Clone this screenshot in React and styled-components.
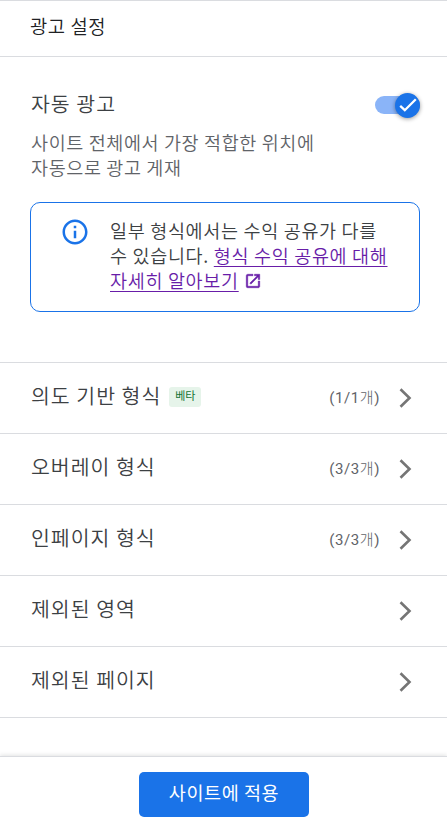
import React from 'react';
import styled, { createGlobalStyle } from 'styled-components';

const GlobalStyle = createGlobalStyle`
  * {
    box-sizing: border-box;
  }

  body {
    margin: 0;
    background: #fff;
    font-family: Roboto, 'Noto Sans CJK KR', sans-serif;
    color: #3c4043;
  }
`;

const Panel = styled.div`
  display: flex;
  flex-direction: column;
  height: 822px;
  overflow: hidden;
  border-top: 1px solid #dadce0;
`;

const Header = styled.header`
  height: 56px;
  padding-left: 30px;
  border-bottom: 1px solid #dadce0;
  font-family: 'Noto Sans CJK KR', sans-serif;
  font-size: 18.75px;
  font-weight: 350;
  line-height: 50px;
  letter-spacing: 0.6px;
  color: #202124;
`;

const AutoAds = styled.section`
  height: 306px;
  padding: 31px 27px 0 30px;
  border-bottom: 1px solid #dadce0;
`;

const TitleRow = styled.div`
  display: flex;
  justify-content: space-between;
  align-items: center;
  height: 30px;
`;

const Title = styled.div`
  padding-left: 1px;
  font-family: 'Noto Sans CJK KR', sans-serif;
  font-size: 20.5px;
  font-weight: 350;
  line-height: 30px;
  letter-spacing: 1px;
  white-space: nowrap;
`;

const Switch = styled.div`
  display: flex;
  align-items: center;
  justify-content: flex-end;
  width: 45px;
  height: 18px;
  margin-top: 4px;
  border-radius: 9px;
  background: #8ab4f8;
`;

const Knob = styled.div`
  flex: none;
  width: 25px;
  height: 25px;
  border-radius: 50%;
  background: #1a73e8;
  box-shadow: 0 1px 4px rgba(0, 0, 0, 0.4);

  svg {
    display: block;
  }
`;

const Description = styled.div`
  margin-top: 12px;
  padding-left: 1px;
  font-family: 'Noto Sans CJK KR', sans-serif;
  font-size: 18.5px;
  font-weight: 350;
  line-height: 25px;
  letter-spacing: 0.62px;
  color: #5f6368;
  white-space: nowrap;
`;

const Notice = styled.div`
  display: flex;
  height: 110px;
  margin-top: 22px;
  padding: 15px 0 0 29px;
  border: 1px solid #1a73e8;
  border-radius: 10px;

  > svg {
    flex: none;
    margin-right: 20px;
    margin-top: -1px;
  }
`;

const NoticeText = styled.div`
  font-family: 'Noto Sans CJK KR', sans-serif;
  font-size: 18.5px;
  font-weight: 350;
  line-height: 25px;
  letter-spacing: 0.68px;
  white-space: nowrap;
`;

const Link = styled.a`
  color: #681da8;
  text-decoration: underline;
  text-decoration-skip-ink: none;
  text-underline-offset: 3px;
  text-decoration-thickness: 1px;
`;

const OpenIcon = styled.svg`
  vertical-align: -2px;
`;

const Row = styled.div`
  display: flex;
  align-items: center;
  height: 71px;
  padding: 0 35px 0 30px;
  border-bottom: 1px solid #dadce0;
`;

const RowTitle = styled(Title)`
  margin-top: -6px;
`;

const Badge = styled.span`
  width: 32px;
  height: 20px;
  margin-left: 8px;
  margin-top: -2px;
  border-radius: 3px;
  background: #e6f4ea;
  color: #137333;
  font-size: 11px;
  line-height: 19px;
  text-align: center;
`;

const Count = styled.span`
  margin-left: auto;
  margin-right: 19px;
  margin-top: -4px;
  font-size: 15px;
  letter-spacing: 0.6px;
  color: #5f6368;
`;

const Unit = styled.span`
  font-weight: 300;
`;

const Chevron = styled.svg`
  flex: none;
  width: 13px;
  height: 20px;
  margin-left: ${(props) => (props.$alone ? 'auto' : '0')};
`;

const Footer = styled.footer`
  display: flex;
  justify-content: center;
  height: 66px;
  margin-top: auto;
  padding-top: 15px;
  border-top: 1px solid #dadce0;
  box-shadow: 0 -1px 4px rgba(60, 64, 67, 0.15);
`;

const ApplyButton = styled.button`
  width: 170px;
  height: 45px;
  padding: 0 0 6px 1px;
  border: 0;
  border-radius: 5px;
  background: #1a73e8;
  color: #fff;
  font-family: 'Noto Sans CJK KR', sans-serif;
  font-size: 18.5px;
  letter-spacing: 0.6px;
`;

const rows = [
  { title: '의도 기반 형식', beta: true, count: '1/1' },
  { title: '오버레이 형식', count: '3/3' },
  { title: '인페이지 형식', count: '3/3' },
  { title: '제외된 영역' },
  { title: '제외된 페이지' },
];

const App = () => (
  <Panel>
    <GlobalStyle />
    <Header>광고 설정</Header>
    <AutoAds>
      <TitleRow>
        <Title>자동 광고</Title>
        <Switch>
          <Knob>
            <svg width="25" height="25" viewBox="0 0 25 25">
              <path d="M5.2 12.8l4.6 4.4L20.8 6.2" fill="none" stroke="#fff" strokeWidth="2.3" />
            </svg>
          </Knob>
        </Switch>
      </TitleRow>
      <Description>
        사이트 전체에서 가장 적합한 위치에
        <br />
        자동으로 광고 게재
      </Description>
      <Notice>
        <svg width="30" height="30" viewBox="0 0 24 24" fill="#1a73e8">
          <path d="M11 7h2v2h-2zm0 4h2v6h-2zm1-9C6.48 2 2 6.48 2 12s4.48 10 10 10 10-4.48 10-10S17.52 2 12 2zm0 18c-4.41 0-8-3.59-8-8s3.59-8 8-8 8 3.59 8 8-3.59 8-8 8z" />
        </svg>
        <NoticeText>
          일부 형식에서는 수익 공유가 다를
          <br />
          수 있습니다. <Link>형식 수익 공유에 대해</Link>
          <br />
          <Link>자세히 알아보기</Link>{' '}
          <OpenIcon width="18" height="18" viewBox="0 0 24 24" fill="#681da8" stroke="#681da8" strokeWidth="0.6">
            <path d="M19 19H5V5h7V3H5a2 2 0 0 0-2 2v14a2 2 0 0 0 2 2h14c1.1 0 2-.9 2-2v-7h-2v7zM14 3v2h3.59l-9.83 9.83 1.41 1.41L19 6.41V10h2V3h-7z" />
          </OpenIcon>
        </NoticeText>
      </Notice>
    </AutoAds>
    {rows.map((row) => (
      <Row key={row.title}>
        <RowTitle>{row.title}</RowTitle>
        {row.beta && <Badge>베타</Badge>}
        {row.count && (
          <Count>
            ({row.count}
            <Unit>개</Unit>)
          </Count>
        )}
        <Chevron $alone={!row.count} viewBox="0 0 13 20">
          <path d="M1.5 1.2L10.5 10l-9 8.8" fill="none" stroke="#757575" strokeWidth="2.6" />
        </Chevron>
      </Row>
    ))}
    <Footer>
      <ApplyButton>사이트에 적용</ApplyButton>
    </Footer>
  </Panel>
);

export default App;
